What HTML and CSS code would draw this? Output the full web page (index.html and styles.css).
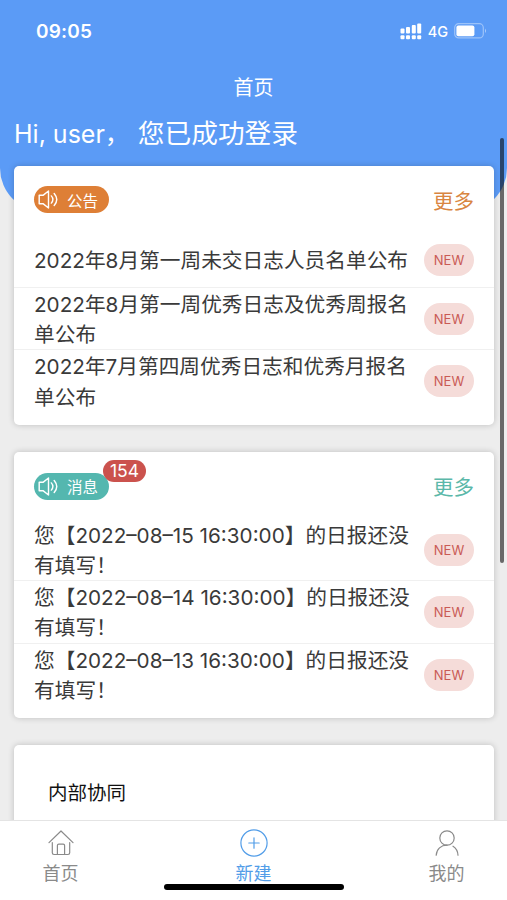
FILE: index.html
```
<!DOCTYPE html>
<html lang="zh-CN">
<head>
    <meta charset="UTF-8">
    <meta name="viewport" content="width=device-width, initial-scale=1.0">
    <title>首页</title>
    <link rel="stylesheet" href="styles.css">
</head>
<body>
    <!-- 喇叭图标 -->
    <svg class="defs" width="0" height="0">
        <symbol id="icon-horn" viewBox="0 0 22 20">
            <path d="M1.2 5.600h4L11 1v18l-5.800-4.600h-4z"/>
            <path d="M14 6.200q3.200 3.800 0 7.600M17 3.600q5.400 6.400 0 12.800"/>
        </symbol>
    </svg>

    <!-- 顶部 -->
    <header class="header">
        <div class="status">
            <span class="time">09:05</span>
            <div class="status-right">
                <svg class="signal" width="22" height="17" viewBox="0 0 22 17">
                    <rect x="0.5" y="5.5" width="4" height="5" rx="1"/>
                    <rect x="6" y="4" width="4" height="6.5" rx="1"/>
                    <rect x="11.8" y="2" width="4" height="8.5" rx="1"/>
                    <rect x="17.2" y="0.5" width="4" height="10" rx="1"/>
                    <rect x="0.5" y="12.3" width="4" height="4" rx="1"/>
                    <rect x="6" y="12.3" width="4" height="4" rx="1"/>
                    <rect x="11.8" y="12.3" width="4" height="4" rx="1"/>
                    <rect x="17.2" y="12.3" width="4" height="4" rx="1"/>
                </svg>
                <span class="network">4G</span>
                <svg class="battery" width="33" height="16" viewBox="0 0 33 16">
                    <rect class="battery-case" x="0.7" y="0.7" width="28.6" height="14.2" rx="4"/>
                    <rect x="2.4" y="2.4" width="18" height="10.8" rx="2"/>
                    <path class="battery-tip" d="M31 5.500q2 2.300 0 4.600z"/>
                </svg>
            </div>
        </div>
        <h1 class="title">首页</h1>
        <p class="welcome">Hi, user，<span class="welcome-text">您已成功登录</span></p>
    </header>

    <main class="content">
        <!-- 公告 -->
        <section class="card notice">
            <div class="card-head">
                <div class="tag orange"><svg class="horn"><use href="#icon-horn"/></svg>公告</div>
                <a class="more orange-text">更多</a>
            </div>
            <ul class="list">
                <li><p>2022年8月第一周未交日志人员名单公布</p><span class="new">NEW</span></li>
                <li><p>2022年8月第一周优秀日志及优秀周报名单公布</p><span class="new">NEW</span></li>
                <li><p>2022年7月第四周优秀日志和优秀月报名单公布</p><span class="new">NEW</span></li>
            </ul>
        </section>

        <!-- 消息 -->
        <section class="card message">
            <div class="card-head">
                <div class="tag teal"><svg class="horn"><use href="#icon-horn"/></svg>消息<span class="count">154</span></div>
                <a class="more teal-text">更多</a>
            </div>
            <ul class="list">
                <li><p>您【2022–08–15 16:30:00】的日报还没有填写！</p><span class="new">NEW</span></li>
                <li><p>您【2022–08–14 16:30:00】的日报还没有填写！</p><span class="new">NEW</span></li>
                <li><p>您【2022–08–13 16:30:00】的日报还没有填写！</p><span class="new">NEW</span></li>
            </ul>
        </section>

        <section class="card team">
            <h2>内部协同</h2>
        </section>
    </main>

    <div class="scrollbar"></div>

    <!-- 底部导航 -->
    <nav class="tabbar">
        <a class="tab">
            <svg width="28" height="28" viewBox="0 0 28 28">
                <path d="M2 13.600 14 2l12 11.600M5.300 13.500v10.300q0 1.700 1.700 1.700h3.400v-9q0-1.400 1.400-1.400h4.400q1.400 0 1.400 1.400v9H21q1.700 0 1.700-1.700V13.500M10.400 25.500h7.200"/>
            </svg>
            <span>首页</span>
        </a>
        <a class="tab active">
            <svg width="28" height="28" viewBox="0 0 28 28">
                <circle cx="14" cy="14" r="13.1"/>
                <path d="M14 8.800v10.400M8.800 14h10.400"/>
            </svg>
            <span>新建</span>
        </a>
        <a class="tab">
            <svg width="28" height="28" viewBox="0 0 28 28">
                <circle cx="14" cy="9" r="7.2"/>
                <path d="M3.200 26.200C3.600 19.900 8 16.200 14 16.200M20 17.200c3.200 2 4.800 5.200 5 9"/>
            </svg>
            <span>我的</span>
        </a>
        <div class="home-bar"></div>
    </nav>
</body>
</html>
```
FILE: styles.css
```
* {
    box-sizing: border-box;
}

body {
    margin: 0;
    height: 900px;
    overflow: hidden;
    position: relative;
    background: #ededed;
    color: #3a3a3a;
    font-family: Inter, "Noto Sans CJK SC", sans-serif;
    font-weight: 390;
}

h1, h2, p, ul {
    margin: 0;
    padding: 0;
    font-weight: 390;
}

.defs {
    position: absolute;
}

/* 顶部 */
.header {
    height: 212px;
    background: #5b9bf6;
    border-radius: 0 0 44px 44px;
    color: #fff;
}

.status {
    height: 62px;
    padding: 0 20px 0 36px;
    display: flex;
    align-items: center;
    justify-content: space-between;
}

.time {
    font-size: 19px;
    font-weight: 600;
    letter-spacing: 0.2px;
}

.status-right {
    display: flex;
    align-items: center;
    gap: 6px;
}

.signal, .battery {
    fill: #fff;
}

.network {
    font-size: 14.5px;
    font-weight: 500;
}

.battery .battery-case {
    fill: none;
    stroke: rgba(255, 255, 255, 0.4);
    stroke-width: 1.2;
}

.battery .battery-tip {
    fill: rgba(255, 255, 255, 0.5);
}

.title {
    height: 48px;
    line-height: 52px;
    font-size: 20px;
    text-align: center;
}

.welcome {
    padding-left: 14px;
    line-height: 46px;
    font-size: 25px;
    white-space: nowrap;
}

.welcome-text {
    margin-left: 8px;
    font-size: 26.7px;
}

/* 卡片 */
.content {
    margin-top: -46px;
    padding: 0 13px 0 14px;
}

.card {
    position: relative;
    height: 259px;
    margin-bottom: 27px;
    background: #fff;
    border-radius: 5px;
    box-shadow: 0 0 6px rgba(0, 0, 0, 0.2);
}

.card.message {
    height: 266px;
}

.card-head {
    height: 66px;
    padding: 1px 20px 0;
    display: flex;
    align-items: center;
    justify-content: space-between;
}

.message .card-head {
    height: 67px;
}

.tag {
    position: relative;
    width: 75px;
    height: 27px;
    padding-left: 4px;
    display: flex;
    align-items: center;
    gap: 8px;
    border-radius: 14px;
    color: #fff;
    font-size: 15.5px;
}

.orange {
    background: #de7f36;
}

.teal {
    background: #54b7af;
}

.orange-text {
    color: #d98541;
}

.teal-text {
    color: #5bb8a9;
}

.horn {
    width: 21px;
    height: 19px;
    fill: none;
    stroke: #fff;
    stroke-width: 1.5;
    stroke-linejoin: round;
    stroke-linecap: round;
}

.count {
    position: absolute;
    left: 69px;
    top: -13px;
    width: 43px;
    height: 22px;
    line-height: 22px;
    border-radius: 11px;
    background: #cb524d;
    font-size: 17.5px;
    text-align: center;
}

.more {
    font-size: 20.5px;
}

.list {
    list-style: none;
}

.list li {
    height: 62.3px;
    padding: 0 20px;
    display: flex;
    align-items: center;
    justify-content: space-between;
    border-bottom: 1px solid #f0f0f0;
}

.notice li:first-child {
    height: 56px;
}

.list li:last-child {
    border-bottom: none;
}

.list p {
    width: 378px;
    padding-top: 3px;
    font-size: 20.7px;
    line-height: 30.6px;
}

.new {
    width: 50px;
    height: 32px;
    line-height: 32px;
    border-radius: 16px;
    background: #f5dcd9;
    color: #c95a55;
    font-size: 13px;
    font-weight: 400;
    text-align: center;
}

.team {
    height: 90px;
    margin-bottom: 0;
    padding: 34px;
}

.team h2 {
    color: #111;
    font-size: 19.5px;
    font-weight: 400;
    line-height: 29px;
}

.scrollbar {
    position: absolute;
    left: 500px;
    top: 138px;
    width: 4px;
    height: 425px;
    border-radius: 2px;
    background: rgba(0, 0, 0, 0.56);
}

/* 底部导航 */
.tabbar {
    position: absolute;
    left: 0;
    right: 0;
    bottom: 0;
    height: 80px;
    padding: 8px 0 0;
    display: flex;
    justify-content: space-between;
    background: #fff;
    border-top: 1px solid #e4e4e4;
}

.tab {
    width: 121px;
    display: flex;
    flex-direction: column;
    align-items: center;
    color: #8a8a8a;
    font-size: 18px;
    line-height: 34px;
}

.tab svg {
    fill: none;
    stroke: currentColor;
    stroke-width: 1.2;
    stroke-linecap: round;
    stroke-linejoin: round;
}

.tab.active {
    color: #529de8;
}

.home-bar {
    position: absolute;
    left: 164px;
    bottom: 10px;
    width: 180px;
    height: 6px;
    border-radius: 3px;
    background: #000;
}
```
